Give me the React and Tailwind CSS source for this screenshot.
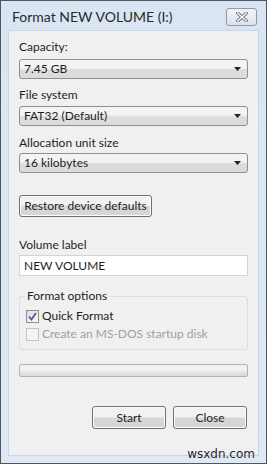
import { useState } from "react";

const font = "font-['Lato','Liberation_Sans',sans-serif]";

function Dropdown({ value }) {
  return (
    <div className="flex h-[20px] items-center justify-between rounded-[3px] border border-[#8e8f8f] bg-gradient-to-b from-[#f3f3f3] from-45% to-[#dcdcdc] to-55% pl-[4px] pr-[6px] text-[12px] text-[#1e1e1e]">
      <span>{value}</span>
      <svg width="7" height="4" viewBox="0 0 7 4">
        <path d="M0 0 H7 L3.5 4 Z" fill="#222" />
      </svg>
    </div>
  );
}

function Btn({ children, className = "" }) {
  return (
    <button
      className={
        "flex items-center justify-center rounded-[3px] border border-[#707070] bg-gradient-to-b from-[#f2f2f2] from-45% to-[#d6d6d6] to-55% text-[12px] text-[#1e1e1e] shadow-[inset_0_0_0_1px_#fcfcfc] " +
        className
      }
    >
      {children}
    </button>
  );
}

function Check({ checked, disabled, label }) {
  return (
    <div className="flex h-[18px] items-center gap-[3px]">
      <span
        className={
          "flex h-[13px] w-[13px] items-center justify-center border " +
          (disabled
            ? "border-[#c4c4c4] bg-[#f4f4f4]"
            : "border-[#8f8f8f] bg-gradient-to-br from-[#dcdcdc] to-[#fbfbfb]")
        }
      >
        {checked && (
          <svg width="9" height="9" viewBox="0 0 9 9">
            <path d="M1 4.5 L3.5 7.5 L8 1" stroke="#4a5f97" strokeWidth="1.8" fill="none" />
          </svg>
        )}
      </span>
      <span className={disabled ? "text-[#a0a0a0]" : "text-[#1e1e1e]"}>{label}</span>
    </div>
  );
}

export default function App() {
  const [label, setLabel] = useState("NEW VOLUME");

  return (
    <div
      className={
        "relative flex h-[464px] w-[267px] flex-col border border-[#51565d] bg-gradient-to-b from-[#d9e5f3] to-[#dfe9f5] " +
        font
      }
    >
      <div className="flex h-[29px] items-center justify-between pl-[11px] pr-[9px]">
        <span className="pt-[2px] text-[14px] text-[#2a2a2a]">Format NEW VOLUME (I:)</span>
        <button className="mt-[2px] flex h-[18px] w-[31px] items-center justify-center rounded-[3px] border border-[#8d99a8] bg-gradient-to-b from-[#f2f5fa] to-[#dbe3ee]">
          <svg width="12" height="10" viewBox="0 0 12 10">
            <path d="M1.5 1 L10.5 9 M10.5 1 L1.5 9" stroke="#6a6f76" strokeWidth="3.2" strokeLinecap="square" />
            <path d="M1.5 1 L10.5 9 M10.5 1 L1.5 9" stroke="#ffffff" strokeWidth="1.4" strokeLinecap="square" />
          </svg>
        </button>
      </div>

      <div className="mx-[7px] mb-[7px] flex flex-1 flex-col border border-[#c9d6e5] bg-[#f0f0f0] px-[10px] pt-[8px] text-[12px] text-[#1e1e1e]">
        <div className="h-[16px] leading-[16px]">Capacity:</div>
        <div className="mt-[4px]">
          <Dropdown value="7.45 GB" />
        </div>

        <div className="mt-[8px] h-[16px] leading-[16px]">File system</div>
        <div className="mt-[3px]">
          <Dropdown value="FAT32 (Default)" />
        </div>

        <div className="mt-[9px] h-[16px] leading-[16px]">Allocation unit size</div>
        <div className="mt-[2px]">
          <Dropdown value="16 kilobytes" />
        </div>

        <Btn className="mt-[22px] h-[22px] w-[133px] self-start">Restore device defaults</Btn>

        <div className="mt-[20px] h-[16px] leading-[16px]">Volume label</div>
        <input
          value={label}
          onChange={(e) => setLabel(e.target.value)}
          className="mt-[2px] h-[21px] border border-[#d3d3d3] bg-white px-[4px] text-[12px] text-[#1e1e1e] outline-none"
        />

        <div className="relative mt-[20px] h-[54px] rounded-[3px] border border-[#d5dfe5] px-[6px] pt-[10px]">
          <span className="absolute left-[5px] top-[-9px] bg-[#f0f0f0] px-[2px] leading-[16px]">Format options</span>
          <Check checked label="Quick Format" />
          <Check disabled label="Create an MS-DOS startup disk" />
        </div>

        <div className="mt-[14px] h-[13px] rounded-[2px] border border-[#b2b2b2] bg-gradient-to-b from-[#f2f2f2] from-40% to-[#d8d8d8]" />

        <div className="mt-[29px] flex justify-end gap-[7px] pr-[1px]">
          <Btn className="h-[23px] w-[74px]">Start</Btn>
          <Btn className="h-[23px] w-[74px]">Close</Btn>
        </div>
      </div>

      <span className="absolute bottom-[2px] right-[11px] font-['DejaVu_Sans',sans-serif] text-[12px] leading-[14px] text-[#2a2a2a]">
        wsxdn.com
      </span>
    </div>
  );
}
